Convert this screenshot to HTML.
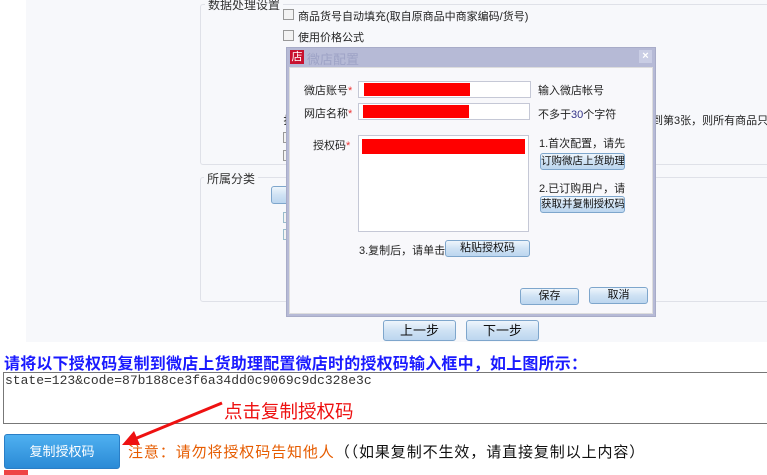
<!DOCTYPE html>
<html><head><meta charset="utf-8"><style>
*{margin:0;padding:0;box-sizing:border-box}
body{width:767px;height:475px;background:#fff;position:relative;overflow:hidden;font-family:"Liberation Sans","Noto Sans CJK SC",sans-serif;font-size:12px;color:#222}
.a{position:absolute}
.fs{position:absolute;border:1px solid #dfe1e8;border-radius:3px}
.lg{position:absolute;background:#f7f8fb;padding:0 3px;font-size:12px;color:#333}
.cb{position:absolute;width:11px;height:11px;border:1px solid #999;background:#f3f3f3}
.btn{position:absolute;border:1px solid #7ea6cc;border-radius:3px;background:linear-gradient(#eef5fc,#cfe2f4 50%,#bcd6ef);text-align:center;font-size:11px;color:#111;white-space:nowrap;overflow:hidden}
.inp{position:absolute;background:#fff;border:1px solid #c5c8d6}
.red{position:absolute;background:#f00}
.t{position:absolute;font-size:11px;white-space:nowrap}
</style></head><body>
<div class="a" style="left:26px;top:0;width:741px;height:342px;background:#f7f8fb"></div>
<div class="fs" style="left:200px;top:4px;width:580px;height:161px"></div>
<div class="lg" style="left:205px;top:-4px">数据处理设置</div>
<div class="cb" style="left:283px;top:9px"></div><div class="t" style="left:298px;top:8px">商品货号自动填充(取自原商品中商家编码/货号)</div>
<div class="cb" style="left:283px;top:30px"></div><div class="t" style="left:298px;top:29px">使用价格公式</div>
<div class="t" style="left:283px;top:112px">扌</div>
<div class="cb" style="left:283px;top:132px"></div>
<div class="cb" style="left:283px;top:150px"></div>
<div class="t" style="left:652px;top:112px">到第3张，则所有商品只抓取</div>
<div class="fs" style="left:200px;top:177px;width:580px;height:125px"></div>
<div class="lg" style="left:204px;top:170px">所属分类</div>
<div class="btn" style="left:271px;top:186px;width:20px;height:18px"></div>
<div class="cb" style="left:283px;top:212px;border-color:#9bc"></div>
<div class="cb" style="left:283px;top:229px;border-color:#9bc"></div>
<!-- dialog -->
<div class="a" style="left:286px;top:47px;width:370px;height:270px;background:#b6bad6;border:1px solid #a8acc8"></div>
<div class="a" style="left:290px;top:50px;width:14px;height:14px;background:#c8102e;color:#fff;font-size:11px;line-height:14px;text-align:center">店</div>
<div class="t" style="left:307px;top:49px;font-size:13px;color:#9ea3c6">微店配置</div>
<div class="a" style="left:639px;top:50px;width:13px;height:13px;background:#c9cde4;color:#fff;font-size:11px;line-height:13px;text-align:center;font-weight:bold">×</div>
<div class="a" style="left:289px;top:67px;width:364px;height:247px;background:#f8f8fb;border:1px solid #ddd"></div>
<div class="t" style="left:304px;top:82px">微店账号<span style="color:#e33">*</span></div>
<div class="inp" style="left:358px;top:81px;width:173px;height:17px"></div><div class="red" style="left:364px;top:83px;width:106px;height:13px"></div>
<div class="t" style="left:538px;top:82px">输入微店帐号</div>
<div class="t" style="left:304px;top:105px">网店名称<span style="color:#e33">*</span></div>
<div class="inp" style="left:358px;top:103px;width:172px;height:17px"></div><div class="red" style="left:363px;top:105px;width:106px;height:13px"></div>
<div class="t" style="left:538px;top:106px">不多于<span style="color:#338">30</span>个字符</div>
<div class="t" style="left:313px;top:137px">授权码<span style="color:#e33">*</span></div>
<div class="inp" style="left:358px;top:135px;width:171px;height:97px"></div><div class="red" style="left:362px;top:139px;width:163px;height:15px"></div>
<div class="t" style="left:539px;top:135px">1.首次配置，请先</div>
<div class="btn" style="left:540px;top:153px;width:85px;height:17px;font-size:10.5px;line-height:15px">订购微店上货助理</div>
<div class="t" style="left:539px;top:180px">2.已订购用户，请</div>
<div class="btn" style="left:540px;top:196px;width:85px;height:17px;font-size:10.5px;line-height:15px">获取并复制授权码</div>
<div class="t" style="left:359px;top:242px">3.复制后，请单击</div>
<div class="btn" style="left:445px;top:240px;width:85px;height:17px;line-height:15px">粘贴授权码</div>
<div class="btn" style="left:520px;top:288px;width:59px;height:17px;line-height:15px">保存</div>
<div class="btn" style="left:589px;top:287px;width:59px;height:17px;line-height:15px">取消</div>
<div class="btn" style="left:383px;top:320px;width:73px;height:21px;font-size:13px;line-height:19px">上一步</div>
<div class="btn" style="left:466px;top:320px;width:73px;height:21px;font-size:13px;line-height:19px">下一步</div>
<!-- bottom -->
<div class="t" style="left:4px;top:350px;font-size:16px;font-weight:bold;color:#1a1aff;letter-spacing:0.2px">请将以下授权码复制到微店上货助理配置微店时的授权码输入框中，如上图所示：</div>
<div class="a" style="left:3px;top:372px;width:770px;height:52px;border:1px solid #777;background:#fff"></div>
<div class="t" style="left:5px;top:373px;font-family:'Liberation Mono',monospace;font-size:13px;color:#333">state=123&amp;code=87b188ce3f6a34dd0c9069c9dc328e3c</div>
<div class="t" style="left:224px;top:398px;font-size:18.5px;color:#e11">点击复制授权码</div>
<svg class="a" style="left:118px;top:400px" width="108" height="50"><line x1="104" y1="3" x2="14" y2="40" stroke="#e11" stroke-width="3"/><polygon points="4,45 16,31 22,45" fill="#e11"/></svg>
<div class="a" style="left:4px;top:434px;width:116px;height:35px;border-radius:3px;background:linear-gradient(#4fb0f0,#2a8ad6);border:1px solid #2a7ec6;color:#fff;font-size:13px;text-align:center;line-height:33px">复制授权码</div>
<div class="t" style="left:128px;top:441px;font-size:15px;color:#e65c00;letter-spacing:0.9px">注意：请勿将授权码告知他人<span style="color:#111">（（如果复制不生效，请直接复制以上内容）</span></div>
<div class="a" style="left:4px;top:470px;width:24px;height:5px;background:#e44"></div>
</body></html>
